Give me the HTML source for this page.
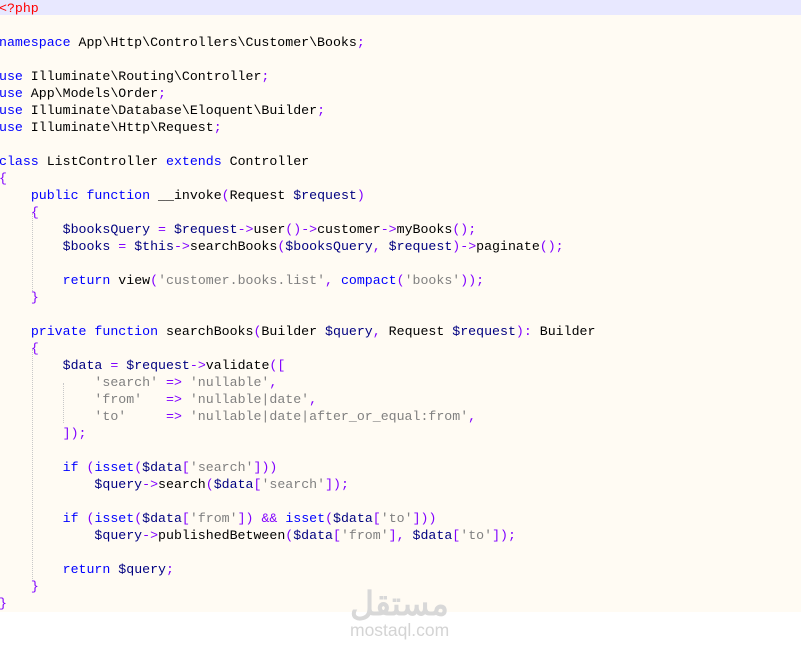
<!DOCTYPE html>
<html><head><meta charset="utf-8"><style>
html,body{margin:0;padding:0;width:801px;height:651px;overflow:hidden;background:#fff}
.bg{position:absolute;left:0;top:0;width:801px;height:612px;background:#fffbf3}
.hl{position:absolute;left:0;top:0;width:801px;height:15px;background:#e8e8ff}
pre{position:absolute;left:-1px;top:0px;margin:0;font-family:"Liberation Mono",monospace;font-size:13.25px;line-height:17px;color:#000}
.k{color:#0000ff}.v{color:#000080}.s{color:#808080}.o{color:#8000ff}.r{color:#ff0000}
.g{position:absolute;width:0;border-left:1px dotted #c8c8c8}
.wm{position:absolute;font-family:"Liberation Sans",sans-serif;color:#d8d8d8;font-weight:bold}
</style></head><body>
<div class="bg"></div><div class="hl"></div>
<div class="g" style="left:32px;top:213px;height:78px"></div>
<div class="g" style="left:32px;top:349px;height:230px"></div>
<div class="g" style="left:63px;top:383px;height:40px"></div>
<pre><span class="r">&lt;?php</span>

<span class="k">namespace</span> App\Http\Controllers\Customer\Books<span class="o">;</span>

<span class="k">use</span> Illuminate\Routing\Controller<span class="o">;</span>
<span class="k">use</span> App\Models\Order<span class="o">;</span>
<span class="k">use</span> Illuminate\Database\Eloquent\Builder<span class="o">;</span>
<span class="k">use</span> Illuminate\Http\Request<span class="o">;</span>

<span class="k">class</span> ListController <span class="k">extends</span> Controller
<span class="o">{</span>
    <span class="k">public function</span> __invoke<span class="o">(</span>Request <span class="v">$request</span><span class="o">)</span>
    <span class="o">{</span>
        <span class="v">$booksQuery</span> <span class="o">=</span> <span class="v">$request</span><span class="o">-&gt;</span>user<span class="o">()-&gt;</span>customer<span class="o">-&gt;</span>myBooks<span class="o">();</span>
        <span class="v">$books</span> <span class="o">=</span> <span class="v">$this</span><span class="o">-&gt;</span>searchBooks<span class="o">(</span><span class="v">$booksQuery</span><span class="o">,</span> <span class="v">$request</span><span class="o">)-&gt;</span>paginate<span class="o">();</span>

        <span class="k">return</span> view<span class="o">(</span><span class="s">'customer.books.list'</span><span class="o">,</span> <span class="k">compact</span><span class="o">(</span><span class="s">'books'</span><span class="o">));</span>
    <span class="o">}</span>

    <span class="k">private function</span> searchBooks<span class="o">(</span>Builder <span class="v">$query</span><span class="o">,</span> Request <span class="v">$request</span><span class="o">):</span> Builder
    <span class="o">{</span>
        <span class="v">$data</span> <span class="o">=</span> <span class="v">$request</span><span class="o">-&gt;</span>validate<span class="o">([</span>
            <span class="s">'search'</span> <span class="o">=&gt;</span> <span class="s">'nullable'</span><span class="o">,</span>
            <span class="s">'from'</span>   <span class="o">=&gt;</span> <span class="s">'nullable|date'</span><span class="o">,</span>
            <span class="s">'to'</span>     <span class="o">=&gt;</span> <span class="s">'nullable|date|after_or_equal:from'</span><span class="o">,</span>
        <span class="o">]);</span>

        <span class="k">if</span> <span class="o">(</span><span class="k">isset</span><span class="o">(</span><span class="v">$data</span><span class="o">[</span><span class="s">'search'</span><span class="o">]))</span>
            <span class="v">$query</span><span class="o">-&gt;</span>search<span class="o">(</span><span class="v">$data</span><span class="o">[</span><span class="s">'search'</span><span class="o">]);</span>

        <span class="k">if</span> <span class="o">(</span><span class="k">isset</span><span class="o">(</span><span class="v">$data</span><span class="o">[</span><span class="s">'from'</span><span class="o">])</span> <span class="o">&amp;&amp;</span> <span class="k">isset</span><span class="o">(</span><span class="v">$data</span><span class="o">[</span><span class="s">'to'</span><span class="o">]))</span>
            <span class="v">$query</span><span class="o">-&gt;</span>publishedBetween<span class="o">(</span><span class="v">$data</span><span class="o">[</span><span class="s">'from'</span><span class="o">],</span> <span class="v">$data</span><span class="o">[</span><span class="s">'to'</span><span class="o">]);</span>

        <span class="k">return</span> <span class="v">$query</span><span class="o">;</span>
    <span class="o">}</span>
<span class="o">}</span></pre>
<div class="wm" style="top:584px;left:350px;font-size:33px;font-family:'Liberation Sans','Noto Sans CJK SC',sans-serif">مستقل</div>
<div class="wm" style="top:620px;left:350px;font-size:17.5px;font-weight:normal;color:#d4d4d4">mostaql.com</div>
</body></html>
